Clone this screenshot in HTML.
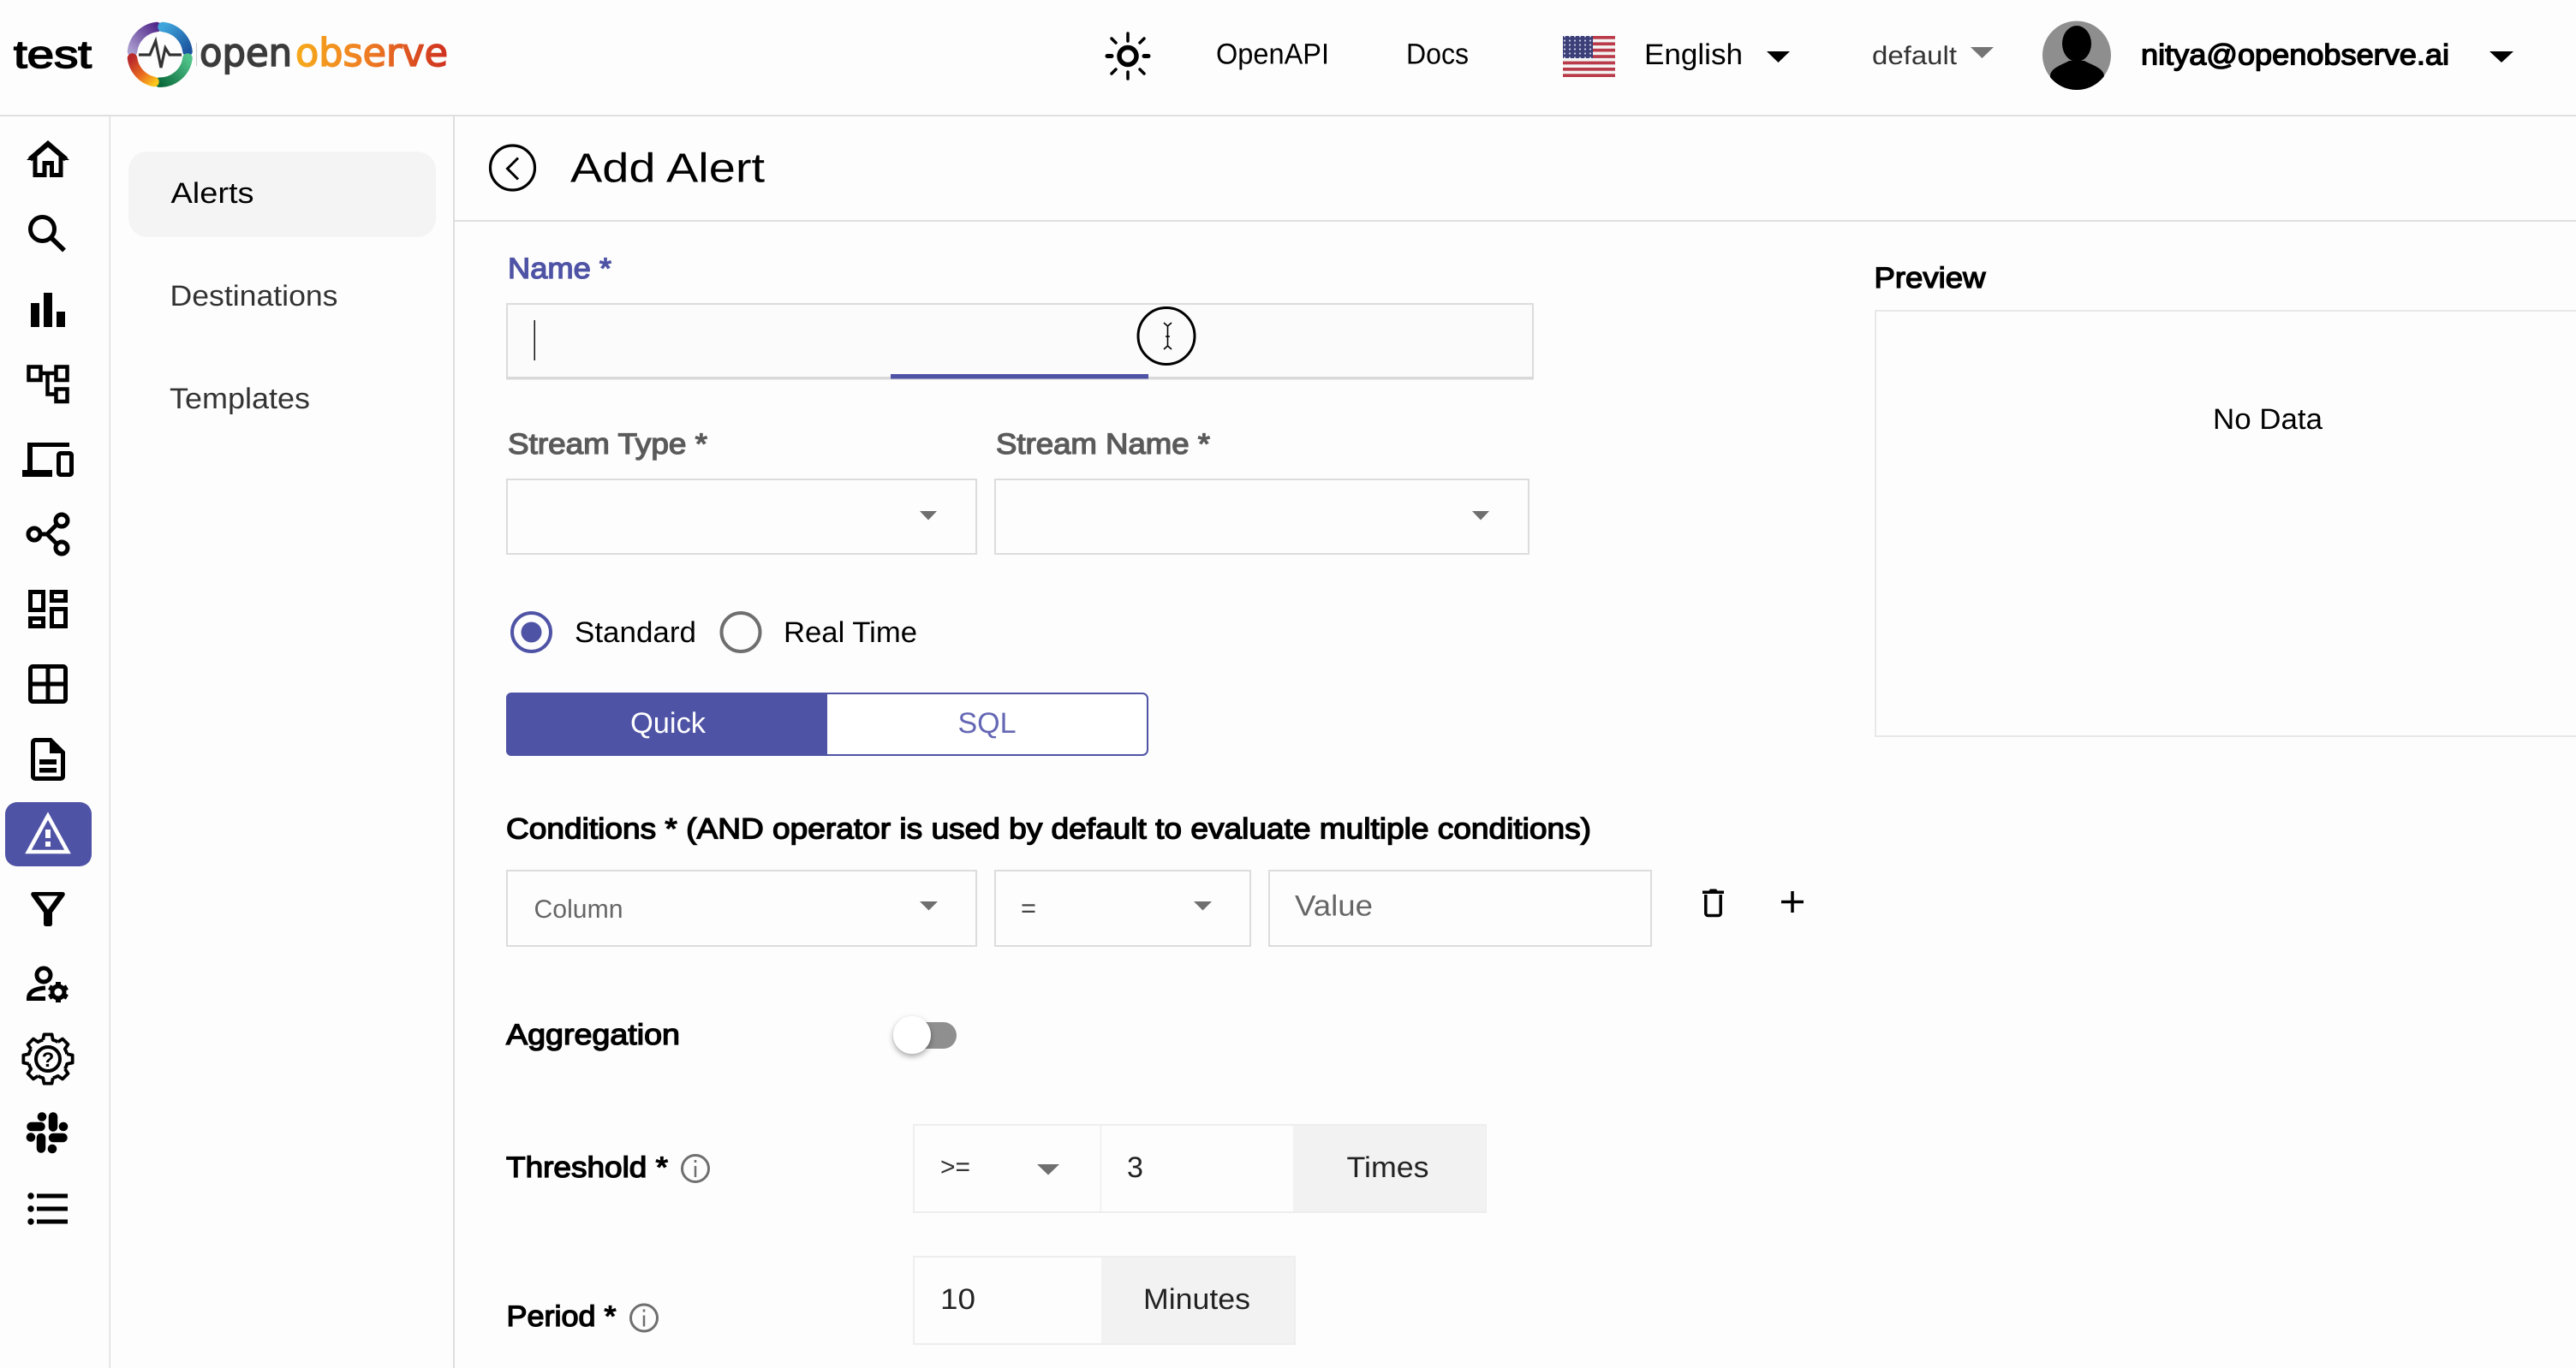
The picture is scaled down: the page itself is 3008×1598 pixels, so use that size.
<!DOCTYPE html>
<html lang="en">
<head>
<meta charset="utf-8">
<title>Add Alert</title>
<style>
html,body{margin:0;padding:0;width:3008px;height:1598px;overflow:hidden;background:#fdfdfd}
svg{display:block}
text{font-family:"Liberation Sans",Arial,sans-serif;font-size:34px;fill:#000;text-rendering:geometricPrecision;white-space:pre}
.b{stroke:#000;stroke-width:1.35px}
.g{fill:#666}
</style>
</head>
<body>
<svg xmlns="http://www.w3.org/2000/svg" width="3008" height="1598" viewBox="0 0 3008 1598">
<defs>
<linearGradient id="gP" gradientUnits="userSpaceOnUse" x1="154" y1="62" x2="186" y2="32"><stop offset="0" stop-color="#ab9fd0"/><stop offset="1" stop-color="#51278a"/></linearGradient>
<linearGradient id="gB" gradientUnits="userSpaceOnUse" x1="190" y1="31" x2="219" y2="60"><stop offset="0" stop-color="#3fa6dc"/><stop offset="1" stop-color="#1c559f"/></linearGradient>
<linearGradient id="gG" gradientUnits="userSpaceOnUse" x1="219" y1="68" x2="186" y2="96"><stop offset="0" stop-color="#4fc28a"/><stop offset="1" stop-color="#0b6a3b"/></linearGradient>
<linearGradient id="gR" gradientUnits="userSpaceOnUse" x1="154" y1="68" x2="182" y2="96"><stop offset="0" stop-color="#b92a2c"/><stop offset=".55" stop-color="#ea6a1e"/><stop offset="1" stop-color="#fbc61c"/></linearGradient>
<linearGradient id="gT" gradientUnits="userSpaceOnUse" x1="345" y1="0" x2="523" y2="0"><stop offset="0" stop-color="#f6ab1c"/><stop offset=".45" stop-color="#ef7f22"/><stop offset="1" stop-color="#cf3020"/></linearGradient>
<pattern id="st" width="6" height="5" patternUnits="userSpaceOnUse"><rect width="6" height="5" fill="#3c3f78"/><circle cx="3" cy="2.5" r="1.1" fill="#cfd2e6"/></pattern>
<filter id="sh" x="-50%" y="-50%" width="200%" height="200%"><feDropShadow dx="0" dy="3" stdDeviation="3.5" flood-color="#000" flood-opacity=".35"/></filter>
<clipPath id="av"><circle cx="2425" cy="65" r="40"/></clipPath>
</defs>

<rect width="3008" height="1598" fill="#fdfdfd"/>

<!-- structure lines -->
<rect x="0" y="134" width="3008" height="2" fill="#dfdfdf"/>
<rect x="127.500" y="136" width="1.500" height="1462" fill="#dedede"/>
<rect x="529" y="136" width="2" height="1462" fill="#dedede"/>
<rect x="531" y="257" width="2477" height="2" fill="#dfdfdf"/>

<!-- header left -->
<text x="16" y="79" class="b" style="font-size:45px;stroke-width:1.6px" textLength="91" lengthAdjust="spacingAndGlyphs">test</text>
<g fill="none" stroke-width="11.500" stroke-linecap="round">
<path d="M154.500 60A32.500 32.500 0 0 1 183 31.500" stroke="url(#gP)"/>
<path d="M190 31.500A32.500 32.500 0 0 1 219 60" stroke="url(#gB)"/>
<path d="M219 68A32.500 32.500 0 0 1 186 96.200" stroke="url(#gG)"/>
<path d="M154.500 68A32.500 32.500 0 0 0 180 95.500" stroke="url(#gR)"/>
</g>
<path d="M162 64H175L181.700 48L188 79L193 56L198 64H212" fill="none" stroke="#333" stroke-width="3.200"/>
<rect x="229" y="50" width="1" height="27" fill="#ccc"/>
<text x="233" y="77" style="font-family:'DejaVu Sans',sans-serif;font-size:45px;fill:#3b3b3b;stroke:#3b3b3b;stroke-width:1.600" textLength="108" lengthAdjust="spacingAndGlyphs">open</text>
<text x="345" y="77" style="font-family:'DejaVu Sans',sans-serif;font-size:45px;fill:url(#gT);stroke:url(#gT);stroke-width:1.600" textLength="178" lengthAdjust="spacingAndGlyphs">observe</text>

<!-- header right -->
<g fill="none" stroke="#000" stroke-linecap="round">
<circle cx="1317" cy="65.500" r="10" stroke-width="5.500"/>
<g stroke-width="3.500">
<path d="M1317 39V48M1317 84V92M1303 50L1298 45M1331 50L1336 45M1303 81L1298 86M1331 81L1336 86"/>
</g>
<g stroke-width="5"><path d="M1293 65.500H1298M1336 65.500H1341"/></g>
</g>
<text x="1420" y="74.500" textLength="132" lengthAdjust="spacingAndGlyphs">OpenAPI</text>
<text x="1642" y="74.500" textLength="73" lengthAdjust="spacingAndGlyphs">Docs</text>

<rect x="1825" y="42" width="61" height="48" fill="#f4f4f4"/>
<g fill="#b93a48">
<rect x="1825" y="42" width="61" height="3.700"/><rect x="1825" y="49.400" width="61" height="3.700"/><rect x="1825" y="56.800" width="61" height="3.700"/><rect x="1825" y="64.200" width="61" height="3.700"/><rect x="1825" y="71.600" width="61" height="3.700"/><rect x="1825" y="79" width="61" height="3.700"/><rect x="1825" y="86.300" width="61" height="3.700"/>
</g>
<rect x="1825" y="42" width="35" height="26" fill="url(#st)"/>
<text x="1920" y="75" textLength="115" lengthAdjust="spacingAndGlyphs">English</text>
<path d="M2063 60H2090L2076.500 73Z"/>
<text x="2186" y="75" style="font-size:30px;fill:#333" textLength="99" lengthAdjust="spacingAndGlyphs">default</text>
<path d="M2301 55H2328L2314.500 68Z" fill="#757575"/>
<circle cx="2425" cy="64.500" r="40" fill="#8e8e8e"/>
<g clip-path="url(#av)"><ellipse cx="2425" cy="51" rx="17" ry="21"/><path d="M2394 106V89C2394 79 2410 75 2416 71H2434C2440 75 2457 79 2457 89V106Z"/></g>
<text x="2500" y="75.500" class="b" textLength="360" lengthAdjust="spacingAndGlyphs">nitya@openobserve.ai</text>
<path d="M2907 60H2935L2921 73Z"/>

<!-- left icon rail -->
<g fill="none" stroke="#000" stroke-width="5">
<path d="M41 183V204.500H52V190.500H60.500V204.500H71V183"/>
<path d="M35 186L56 168L77 186" stroke-width="6"/>
<path d="M31 187L56 164L81 187H74L56 171L38 187Z" fill="#000" stroke="none"/>
<circle cx="49.500" cy="267.500" r="14"/>
<path d="M60 278L75 292.500" stroke-width="5.500"/>
</g>
<rect x="36" y="354" width="10" height="28"/><rect x="51" y="342" width="10" height="40"/><rect x="66" y="364" width="10" height="18"/>
<g fill="none" stroke="#000" stroke-width="4.500">
<rect x="33.500" y="428.500" width="14" height="15.500"/>
<rect x="65.500" y="428.500" width="13" height="15.500"/>
<rect x="65.500" y="454.500" width="13" height="14.500"/>
<path d="M48 436H65M55.500 436V460.500H65"/>
</g>
<path d="M32 517H81V522H38V549H61V557H26V549H32Z"/>
<rect x="68.500" y="529.500" width="15" height="25" rx="2" fill="none" stroke="#000" stroke-width="5"/>
<g fill="none" stroke="#000" stroke-width="5">
<circle cx="40" cy="624" r="7"/><circle cx="72" cy="608" r="7"/><circle cx="72" cy="640" r="7"/>
<path d="M47 624H55L66 613M55 624L66 635"/>
<rect x="35.500" y="691.500" width="15" height="21"/>
<rect x="60.500" y="691.500" width="16" height="10"/>
<rect x="35.500" y="722.500" width="15" height="9"/>
<rect x="60.500" y="711.500" width="16" height="20"/>
<rect x="35.500" y="778.500" width="41" height="41" rx="3"/>
<path d="M56 778V820M35 799H77"/>
</g>
<path d="M41 862H60L76 878V907A5 5 0 0 1 71 912H41A5 5 0 0 1 36 907V867A5 5 0 0 1 41 862Z"/>
<path d="M41 867H58V880H71V907H41Z" fill="#fdfdfd"/>
<rect x="46" y="887" width="20" height="6"/><rect x="46" y="897" width="20" height="5.500"/>

<rect x="6" y="937" width="101" height="75" rx="14" fill="#4f53a5"/>
<path d="M56 953L33 995H79Z" fill="none" stroke="#fff" stroke-width="4.500"/>
<rect x="53" y="969" width="6" height="10" fill="#fff"/><rect x="53" y="983" width="6" height="6" fill="#fff"/>

<path d="M39 1042H73Q76.500 1042 75.500 1046L61 1066V1079Q61 1082 58 1082H54Q51 1082 51 1079V1066L36.500 1046Q35.500 1042 39 1042ZM44.500 1046.500L56 1062.500L67.500 1046.500Z" fill-rule="evenodd"/>

<circle cx="51" cy="1139" r="8" fill="none" stroke="#000" stroke-width="5"/>
<path d="M53 1154C41 1155 33.500 1158 33.500 1166.500H53" fill="none" stroke="#000" stroke-width="5"/>
<g>
<circle cx="68" cy="1159" r="9.500"/>
<g fill="#000"><rect x="65" y="1147" width="6" height="24"/><rect x="65" y="1147" width="6" height="24" transform="rotate(60 68 1159)"/><rect x="65" y="1147" width="6" height="24" transform="rotate(120 68 1159)"/></g>
<circle cx="68" cy="1159" r="4.500" fill="#fdfdfd"/>
</g>

<g fill="none" stroke="#000" stroke-width="3.800" transform="translate(56 1237)">
<g stroke-linejoin="round">
<path d="M-5.760 -22.270L-4.540 -28.640H4.540L5.760 -22.270A23 23 0 0 1 11.670 -19.820"/>
<path transform="rotate(45)" d="M-5.760 -22.270L-4.540 -28.640H4.540L5.760 -22.270A23 23 0 0 1 11.670 -19.820"/>
<path transform="rotate(90)" d="M-5.760 -22.270L-4.540 -28.640H4.540L5.760 -22.270A23 23 0 0 1 11.670 -19.820"/>
<path transform="rotate(135)" d="M-5.760 -22.270L-4.540 -28.640H4.540L5.760 -22.270A23 23 0 0 1 11.670 -19.820"/>
<path transform="rotate(180)" d="M-5.760 -22.270L-4.540 -28.640H4.540L5.760 -22.270A23 23 0 0 1 11.670 -19.820"/>
<path transform="rotate(225)" d="M-5.760 -22.270L-4.540 -28.640H4.540L5.760 -22.270A23 23 0 0 1 11.670 -19.820"/>
<path transform="rotate(270)" d="M-5.760 -22.270L-4.540 -28.640H4.540L5.760 -22.270A23 23 0 0 1 11.670 -19.820"/>
<path transform="rotate(315)" d="M-5.760 -22.270L-4.540 -28.640H4.540L5.760 -22.270A23 23 0 0 1 11.670 -19.820"/>
</g>
<circle r="14" stroke-width="4"/>
</g>
<text x="56" y="1246" style="font-size:24px;font-weight:700" text-anchor="middle">?</text>

<g fill="none" stroke="#000" stroke-width="10.500" stroke-linecap="round">
<path d="M36.500 1316H47.500M62 1304.500V1316.500M62 1329H73.500M48 1329V1341.500"/>
</g>
<circle cx="49" cy="1304.500" r="5.300"/><circle cx="74" cy="1316" r="5.300"/><circle cx="61" cy="1342" r="5.300"/><circle cx="36" cy="1328.500" r="5.300"/>

<circle cx="36" cy="1397" r="3.700"/><circle cx="36" cy="1412" r="3.700"/><circle cx="36" cy="1427" r="3.700"/>
<rect x="43" y="1394.500" width="36" height="5"/><rect x="43" y="1409.500" width="36" height="5"/><rect x="43" y="1424.500" width="36" height="5"/>

<!-- second nav -->
<rect x="150" y="177" width="359" height="100" rx="22" fill="#f4f4f4"/>
<text x="199.500" y="237" textLength="97" lengthAdjust="spacingAndGlyphs">Alerts</text>
<text x="198.500" y="357" style="fill:#333" textLength="196" lengthAdjust="spacingAndGlyphs">Destinations</text>
<text x="198" y="477" style="fill:#333" textLength="164" lengthAdjust="spacingAndGlyphs">Templates</text>

<!-- page title -->
<circle cx="598.500" cy="196" r="26" fill="none" stroke="#000" stroke-width="3.200"/>
<path d="M605 184.500L592.500 197L605 209.500" fill="none" stroke="#000" stroke-width="3"/>
<text x="666" y="212.500" style="font-size:48px" textLength="227" lengthAdjust="spacingAndGlyphs">Add Alert</text>

<!-- Name -->
<text x="593" y="325" class="b" style="fill:#4f53a5;stroke:#4f53a5" textLength="121" lengthAdjust="spacingAndGlyphs">Name *</text>
<rect x="592" y="355" width="1198" height="87" fill="#fbfbfb" stroke="#dcdcdc" stroke-width="2"/>
<rect x="591" y="440" width="1200" height="3.500" fill="#d9d9d9"/>
<rect x="1040" y="437" width="301" height="5.500" fill="#4f53a5"/>
<rect x="623.500" y="374" width="1.500" height="47" fill="#111"/>
<circle cx="1362" cy="392.500" r="33" fill="none" stroke="#000" stroke-width="3"/>
<path d="M1359 377L1363.500 381L1368 377M1363.500 381V404M1359 408L1363.500 404L1368 408M1361 393H1366" fill="none" stroke="#000" stroke-width="1.600"/>

<!-- Stream -->
<text x="593" y="530" class="b" style="fill:#5a5a5a;stroke:#5a5a5a" textLength="233" lengthAdjust="spacingAndGlyphs">Stream Type *</text>
<text x="1163" y="530" class="b" style="fill:#5a5a5a;stroke:#5a5a5a" textLength="250" lengthAdjust="spacingAndGlyphs">Stream Name *</text>
<rect x="592" y="560" width="548" height="87" fill="#fdfdfd" stroke="#dcdcdc" stroke-width="2"/>
<rect x="1162" y="560" width="623" height="87" fill="#fdfdfd" stroke="#dcdcdc" stroke-width="2"/>
<path d="M1074 597H1094L1084 607.500Z" fill="#6f6f6f"/>
<path d="M1719 597H1739L1729 607.500Z" fill="#6f6f6f"/>

<!-- radios -->
<circle cx="620.500" cy="738.500" r="22.500" fill="none" stroke="#4f53a5" stroke-width="4"/>
<circle cx="620.500" cy="738.500" r="12" fill="#4f53a5"/>
<text x="671" y="750" textLength="142" lengthAdjust="spacingAndGlyphs">Standard</text>
<circle cx="865" cy="738.500" r="22.500" fill="none" stroke="#6f6f6f" stroke-width="4"/>
<text x="915" y="750" textLength="156" lengthAdjust="spacingAndGlyphs">Real Time</text>

<!-- Quick / SQL -->
<rect x="592" y="810" width="748" height="72" rx="6" fill="#fff" stroke="#4f53a5" stroke-width="2"/>
<path d="M597 809H966V883H597A6 6 0 0 1 591 877V815A6 6 0 0 1 597 809Z" fill="#4f53a5"/>
<text x="736" y="856" style="fill:#fff" textLength="88" lengthAdjust="spacingAndGlyphs">Quick</text>
<text x="1118.500" y="856" style="fill:#6467b4" textLength="68" lengthAdjust="spacingAndGlyphs">SQL</text>

<!-- Conditions -->
<text x="591" y="979.500" class="b" textLength="1267" lengthAdjust="spacingAndGlyphs">Conditions * (AND operator is used by default to evaluate multiple conditions)</text>
<rect x="592" y="1017" width="548" height="88" fill="#fdfdfd" stroke="#dcdcdc" stroke-width="2"/>
<text x="623.500" y="1072" class="g" style="font-size:30px" textLength="104" lengthAdjust="spacingAndGlyphs">Column</text>
<path d="M1074 1053H1095L1084.500 1063.500Z" fill="#6f6f6f"/>
<rect x="1162" y="1017" width="298" height="88" fill="#fdfdfd" stroke="#dcdcdc" stroke-width="2"/>
<text x="1192" y="1071" style="font-size:30px;fill:#444" textLength="18" lengthAdjust="spacingAndGlyphs">=</text>
<path d="M1394 1053H1415L1404.500 1063.500Z" fill="#6f6f6f"/>
<rect x="1482" y="1017" width="446" height="88" fill="#fdfdfd" stroke="#dcdcdc" stroke-width="2"/>
<text x="1512" y="1069.500" class="g" textLength="91" lengthAdjust="spacingAndGlyphs">Value</text>
<!-- trash -->
<path d="M1988 1040.500H1995.500L1997 1038.500H2004L2005.500 1040.500H2013V1044H1988Z"/>
<path d="M1991.800 1045V1067A2.500 2.500 0 0 0 1994.300 1069.500H2006.700A2.500 2.500 0 0 0 2009.200 1067V1045" fill="none" stroke="#000" stroke-width="3.500"/>
<path d="M2093 1041V1066M2080 1053.500H2106" stroke="#000" stroke-width="3.500" fill="none"/>

<!-- Aggregation -->
<text x="591" y="1220" class="b" textLength="203" lengthAdjust="spacingAndGlyphs">Aggregation</text>
<rect x="1065" y="1194" width="52" height="31" rx="15.500" fill="#8f8f8f"/>
<circle cx="1065" cy="1209" r="22" fill="#fff" filter="url(#sh)"/>

<!-- Threshold -->
<text x="591" y="1375" class="b" textLength="189" lengthAdjust="spacingAndGlyphs">Threshold *</text>
<circle cx="812" cy="1365" r="15.500" fill="none" stroke="#6f6f6f" stroke-width="3"/>
<path d="M812 1362V1375" stroke="#6f6f6f" stroke-width="2.500"/><rect x="810.700" y="1355" width="2.600" height="3" fill="#6f6f6f"/>
<rect x="1510" y="1313" width="226" height="104" fill="#f2f2f2"/>
<rect x="1067" y="1314" width="668" height="102" fill="none" stroke="#eeeeee" stroke-width="2"/>
<rect x="1284.500" y="1314" width="1.500" height="102" fill="#eeeeee"/>
<rect x="1510" y="1315" width="225" height="100" fill="#f2f2f2"/>
<text x="1098" y="1373" style="font-size:30px;fill:#333" textLength="35" lengthAdjust="spacingAndGlyphs">&gt;=</text>
<path d="M1211 1360H1237L1224 1372.500Z" fill="#6f6f6f"/>
<text x="1316" y="1375" textLength="19" lengthAdjust="spacingAndGlyphs" style="fill:#222">3</text>
<text x="1572.500" y="1375" style="fill:#222" textLength="96" lengthAdjust="spacingAndGlyphs">Times</text>

<!-- Period -->
<text x="591.500" y="1549" class="b" textLength="128" lengthAdjust="spacingAndGlyphs">Period *</text>
<circle cx="752" cy="1539.500" r="15.500" fill="none" stroke="#6f6f6f" stroke-width="3"/>
<path d="M752 1536.500V1549.500" stroke="#6f6f6f" stroke-width="2.500"/><rect x="750.700" y="1529.500" width="2.600" height="3" fill="#6f6f6f"/>
<rect x="1067" y="1468" width="445" height="102" fill="none" stroke="#eeeeee" stroke-width="2"/>
<rect x="1286" y="1469" width="225" height="100" fill="#f2f2f2"/>
<text x="1098" y="1529" style="fill:#222" textLength="41" lengthAdjust="spacingAndGlyphs">10</text>
<text x="1335" y="1529" style="fill:#222" textLength="125" lengthAdjust="spacingAndGlyphs">Minutes</text>

<!-- Preview -->
<text x="2188.500" y="336" class="b" textLength="130" lengthAdjust="spacingAndGlyphs">Preview</text>
<rect x="2190" y="363" width="830" height="497" fill="#fdfdfd" stroke="#e8e8e8" stroke-width="2"/>
<text x="2584" y="501" textLength="128" lengthAdjust="spacingAndGlyphs">No Data</text>
</svg>
</body>
</html>
